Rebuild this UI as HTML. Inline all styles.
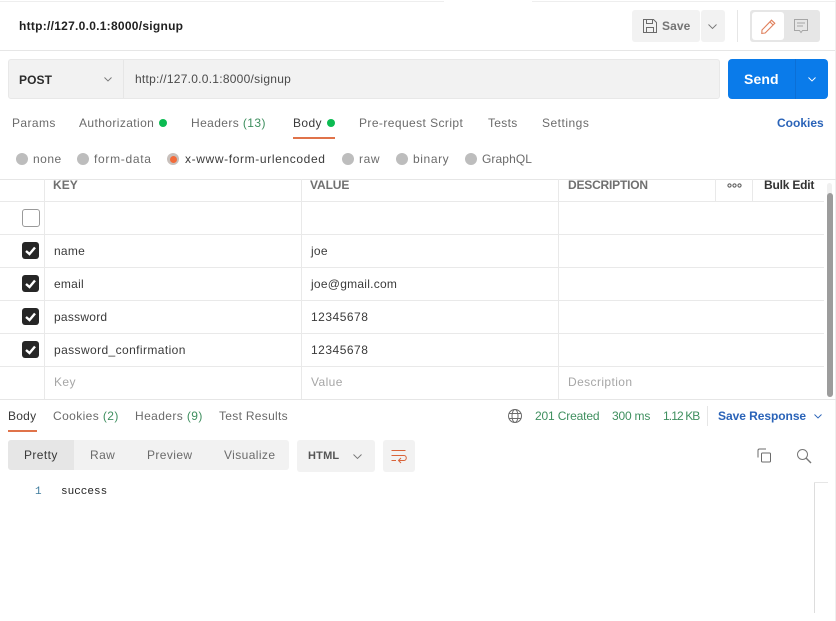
<!DOCTYPE html>
<html><head><meta charset="utf-8">
<style>
html,body{margin:0;padding:0;background:#fff}
body{width:836px;height:621px;position:relative;overflow:hidden;font-family:"Liberation Sans",sans-serif;font-size:12px;color:#6b6b6b}
.t{position:absolute;white-space:nowrap;line-height:16px;letter-spacing:.4px}
.b{position:absolute}
.d{color:#3a3a3a}
.g{color:#3f8f5f}
svg{position:absolute;overflow:visible}
</style></head><body>
<div class="b" style="left:0;top:1px;width:836px;height:1px;background:#eee"></div>
<div class="b" style="left:444px;top:0;width:88px;height:3px;background:#fff"></div>
<div class="b" style="left:0;top:50px;width:836px;height:1px;background:#e6e6e6"></div>
<div class="b" style="left:835px;top:0;width:1px;height:621px;background:#efefef"></div>

<span class="t" style="left:19px;top:18px;color:#212121;font-weight:bold;letter-spacing:.27px">http://127.0.0.1:8000/signup</span>

<div class="b" style="left:632px;top:10px;width:68px;height:32px;background:#f2f2f2;border-radius:3px"></div>
<div class="b" style="left:701px;top:10px;width:24px;height:32px;background:#f2f2f2;border-radius:3px"></div>
<svg style="left:643px;top:19px" width="14" height="14" viewBox="0 0 14 14" fill="none" stroke="#6b6b6b" stroke-width="1"><path d="M.5 .5H10.5L13.5 3.5V13.5H.5Z"/><path d="M3.5 .5V4.5H9.5V.5M3.5 13.5V8.5H10.5V13.5"/></svg>
<span class="t" style="left:662px;top:18px;color:#747474;font-weight:bold;letter-spacing:.1px">Save</span>
<svg style="left:708px;top:24px" width="9" height="5" fill="none" stroke="#777" stroke-width=".9"><path d="M.5 .5L4.5 4.5L8.5 .5"/></svg>
<div class="b" style="left:737px;top:10px;width:1px;height:32px;background:#e6e6e6"></div>
<div class="b" style="left:750px;top:10px;width:70px;height:32px;background:#e6e6e6;border-radius:3px"></div>
<div class="b" style="left:752px;top:12px;width:32px;height:28px;background:#fff;border-radius:3px"></div>
<svg style="left:761px;top:19px" width="15" height="15" viewBox="0 0 15 15" fill="none" stroke="#e0805c" stroke-width="1.1"><path d="M1 11L10.5 1.2L13.8 4.3L4.2 14L.8 14.4Z"/><path d="M9 3L12.2 6"/></svg>
<svg style="left:794px;top:19px" width="14" height="15" viewBox="0 0 14 15" fill="none" stroke="#a6a6a6"><path d="M.5 .5H13.5V11.5H8.5L7 13.5L5.5 11.5H.5Z"/><path d="M3 4H11M3 7H9"/></svg>

<div class="b" style="left:8px;top:59px;width:710px;height:38px;background:#f2f2f2;border:1px solid #e8e8e8;border-radius:3px"></div>
<div class="b" style="left:123px;top:60px;width:1px;height:38px;background:#e6e6e6"></div>
<span class="t" style="left:19px;top:72px;color:#2b2b2b;font-weight:bold;font-size:12px;letter-spacing:.1px">POST</span>
<svg style="left:104px;top:77px" width="8" height="5" fill="none" stroke="#777" stroke-width=".9"><path d="M.5 .5L4 4L7.5 .5"/></svg>
<span class="t" style="left:135px;top:71px;color:#4a4a4a;letter-spacing:.26px">http://127.0.0.1:8000/signup</span>

<div class="b" style="left:728px;top:59px;width:100px;height:40px;background:#0a7bea;border-radius:4px"></div>
<div class="b" style="left:795px;top:59px;width:1px;height:40px;background:#0b6fd6"></div>
<span class="t" style="left:744px;top:71px;color:#fff;font-weight:bold;font-size:14px;letter-spacing:.1px">Send</span>
<svg style="left:808px;top:77px" width="8" height="5" fill="none" stroke="#fff" stroke-width=".9"><path d="M.5 .5L4 4L7.5 .5"/></svg>

<span class="t" style="left:12px;top:115px">Params</span>
<span class="t" style="left:79px;top:115px">Authorization</span>
<div class="b" style="left:159px;top:119px;width:8px;height:8px;border-radius:50%;background:#0cbb52"></div>
<span class="t" style="left:191px;top:115px">Headers <span class="g">(13)</span></span>
<span class="t d" style="left:293px;top:115px">Body</span>
<div class="b" style="left:327px;top:119px;width:8px;height:8px;border-radius:50%;background:#0cbb52"></div>
<div class="b" style="left:293px;top:137px;width:42px;height:2px;background:#e0734a"></div>
<span class="t" style="left:359px;top:115px;letter-spacing:.42px">Pre-request Script</span>
<span class="t" style="left:488px;top:115px;letter-spacing:.3px">Tests</span>
<span class="t" style="left:542px;top:115px;letter-spacing:.5px">Settings</span>
<span class="t" style="left:777px;top:115px;color:#2a63b8;font-weight:bold;letter-spacing:0">Cookies</span>

<div class="b" style="left:16px;top:153px;width:12px;height:12px;border-radius:50%;background:#bdbdbd"></div>
<span class="t" style="left:33px;top:151px;letter-spacing:.5px">none</span>
<div class="b" style="left:77px;top:153px;width:12px;height:12px;border-radius:50%;background:#bdbdbd"></div>
<span class="t" style="left:94px;top:151px;letter-spacing:.7px">form-data</span>
<div class="b" style="left:167px;top:153px;width:12px;height:12px;border-radius:50%;background:#c8c0bc"></div>
<div class="b" style="left:170px;top:156px;width:7px;height:7px;border-radius:50%;background:#f26b3a"></div>
<span class="t d" style="left:185px;top:151px;letter-spacing:.63px">x-www-form-urlencoded</span>
<div class="b" style="left:342px;top:153px;width:12px;height:12px;border-radius:50%;background:#bdbdbd"></div>
<span class="t" style="left:359px;top:151px;letter-spacing:.6px">raw</span>
<div class="b" style="left:396px;top:153px;width:12px;height:12px;border-radius:50%;background:#bdbdbd"></div>
<span class="t" style="left:413px;top:151px;letter-spacing:.6px">binary</span>
<div class="b" style="left:465px;top:153px;width:12px;height:12px;border-radius:50%;background:#bdbdbd"></div>
<span class="t" style="left:482px;top:151px;letter-spacing:.1px">GraphQL</span>

<div class="b" style="left:0;top:179px;width:836px;height:1px;background:#e6e6e6"></div>
<div class="b" style="left:0;top:201px;width:824px;height:1px;background:#e9e9e9"></div>
<div class="b" style="left:0;top:234px;width:824px;height:1px;background:#e9e9e9"></div>
<div class="b" style="left:0;top:267px;width:824px;height:1px;background:#e9e9e9"></div>
<div class="b" style="left:0;top:300px;width:824px;height:1px;background:#e9e9e9"></div>
<div class="b" style="left:0;top:333px;width:824px;height:1px;background:#e9e9e9"></div>
<div class="b" style="left:0;top:366px;width:824px;height:1px;background:#e9e9e9"></div>
<div class="b" style="left:0;top:399px;width:836px;height:1px;background:#e6e6e6"></div>
<div class="b" style="left:44px;top:179px;width:1px;height:220px;background:#e9e9e9"></div>
<div class="b" style="left:301px;top:179px;width:1px;height:220px;background:#e9e9e9"></div>
<div class="b" style="left:558px;top:179px;width:1px;height:220px;background:#e9e9e9"></div>
<div class="b" style="left:715px;top:179px;width:1px;height:22px;background:#e9e9e9"></div>
<div class="b" style="left:752px;top:179px;width:1px;height:22px;background:#e9e9e9"></div>

<span class="t" style="left:53px;top:177px;font-weight:bold;color:#707070;letter-spacing:.05px">KEY</span>
<span class="t" style="left:310px;top:177px;font-weight:bold;color:#707070;letter-spacing:-.1px">VALUE</span>
<span class="t" style="left:568px;top:177px;font-weight:bold;color:#707070;letter-spacing:-.2px">DESCRIPTION</span>
<svg style="left:727px;top:183px" width="15" height="5" fill="none" stroke="#555"><circle cx="2.5" cy="2.5" r="1.6"/><circle cx="7.5" cy="2.5" r="1.6"/><circle cx="12.5" cy="2.5" r="1.6"/></svg>
<span class="t" style="left:764px;top:177px;font-weight:bold;color:#333;letter-spacing:-.2px">Bulk Edit</span>

<div class="b" style="left:827px;top:183px;width:5px;height:214px;background:#f0f0f0;border-radius:3px"></div>
<div class="b" style="left:827px;top:193px;width:6px;height:204px;background:#9c9c9c;border-radius:3px"></div>

<div class="b" style="left:22px;top:209px;width:16px;height:16px;border:1px solid #9a9a9a;border-radius:3px;background:#fff"></div>
<div class="b" style="left:22px;top:242px;width:17px;height:17px;background:#262626;border-radius:3px"></div>
<svg style="left:22px;top:242px" width="17" height="17" fill="none" stroke="#fff" stroke-width="2.4"><path d="M4 9L7.5 12L13 5.5"/></svg>
<div class="b" style="left:22px;top:275px;width:17px;height:17px;background:#262626;border-radius:3px"></div>
<svg style="left:22px;top:275px" width="17" height="17" fill="none" stroke="#fff" stroke-width="2.4"><path d="M4 9L7.5 12L13 5.5"/></svg>
<div class="b" style="left:22px;top:308px;width:17px;height:17px;background:#262626;border-radius:3px"></div>
<svg style="left:22px;top:308px" width="17" height="17" fill="none" stroke="#fff" stroke-width="2.4"><path d="M4 9L7.5 12L13 5.5"/></svg>
<div class="b" style="left:22px;top:341px;width:17px;height:17px;background:#262626;border-radius:3px"></div>
<svg style="left:22px;top:341px" width="17" height="17" fill="none" stroke="#fff" stroke-width="2.4"><path d="M4 9L7.5 12L13 5.5"/></svg>

<span class="t d" style="left:54px;top:243px;letter-spacing:.25px">name</span>
<span class="t d" style="left:311px;top:243px;letter-spacing:.25px">joe</span>
<span class="t d" style="left:54px;top:276px;letter-spacing:.25px">email</span>
<span class="t d" style="left:311px;top:276px;letter-spacing:.25px">joe@gmail.com</span>
<span class="t d" style="left:54px;top:309px;letter-spacing:.25px">password</span>
<span class="t d" style="left:311px;top:309px;letter-spacing:.5px">12345678</span>
<span class="t d" style="left:54px;top:342px">password_confirmation</span>
<span class="t d" style="left:311px;top:342px;letter-spacing:.5px">12345678</span>
<span class="t" style="left:54px;top:374px;color:#a6a6a6">Key</span>
<span class="t" style="left:311px;top:374px;color:#a6a6a6">Value</span>
<span class="t" style="left:568px;top:374px;color:#a6a6a6">Description</span>

<span class="t d" style="left:8px;top:408px;letter-spacing:.25px">Body</span>
<div class="b" style="left:8px;top:430px;width:29px;height:2px;background:#e0734a"></div>
<span class="t" style="left:53px;top:408px">Cookies <span class="g">(2)</span></span>
<span class="t" style="left:135px;top:408px">Headers <span class="g">(9)</span></span>
<span class="t" style="left:219px;top:408px;letter-spacing:.3px">Test Results</span>

<svg style="left:508px;top:409px" width="14" height="14" viewBox="0 0 14 14" fill="none" stroke="#6b6b6b"><circle cx="7" cy="7" r="6.5"/><ellipse cx="7" cy="7" rx="3" ry="6.5"/><path d="M1 4.5H13M1 9.5H13"/></svg>
<span class="t g" style="left:535px;top:408px;letter-spacing:-.15px">201 Created</span>
<span class="t g" style="left:612px;top:408px;letter-spacing:-.2px">300 ms</span>
<span class="t g" style="left:663px;top:408px;letter-spacing:-.9px">1.12 KB</span>
<div class="b" style="left:707px;top:406px;width:1px;height:20px;background:#e6e6e6"></div>
<span class="t" style="left:718px;top:408px;color:#2a63b8;font-weight:bold;letter-spacing:-.05px">Save Response</span>
<svg style="left:814px;top:414px" width="8" height="5" fill="none" stroke="#2a63b8" stroke-width=".9"><path d="M.5 .5L4 4L7.5 .5"/></svg>

<div class="b" style="left:8px;top:440px;width:281px;height:30px;background:#f2f2f2;border-radius:3px"></div>
<div class="b" style="left:8px;top:440px;width:66px;height:30px;background:#e6e6e6;border-radius:3px 0 0 3px"></div>
<span class="t d" style="left:24px;top:447px">Pretty</span>
<span class="t" style="left:90px;top:447px">Raw</span>
<span class="t" style="left:147px;top:447px">Preview</span>
<span class="t" style="left:224px;top:447px">Visualize</span>
<div class="b" style="left:297px;top:440px;width:78px;height:32px;background:#f2f2f2;border-radius:3px"></div>
<span class="t" style="left:308px;top:448px;font-weight:bold;font-size:11px;color:#555;letter-spacing:.2px">HTML</span>
<svg style="left:353px;top:454px" width="9" height="5" fill="none" stroke="#777" stroke-width=".9"><path d="M.5 .5L4.5 4.5L8.5 .5"/></svg>
<div class="b" style="left:383px;top:440px;width:32px;height:32px;background:#f2f2f2;border-radius:3px"></div>
<svg style="left:391px;top:450px" width="16" height="14" viewBox="0 0 16 14" fill="none" stroke="#d9643a"><path d="M.5 .5H14.5M.5 5.5H13C16 5.5 16 10.5 13 10.5H8"/><path d="M10 8L7.5 10.5L10 13M.5 10.5H5"/></svg>
<svg style="left:757px;top:448px" width="15" height="15" viewBox="0 0 15 15" fill="none" stroke="#6b6b6b"><rect x="4.5" y="5" width="9" height="9" rx="1"/><path d="M1 9.5V2.5Q1 1 2.5 1H9"/></svg>
<svg style="left:797px;top:449px" width="15" height="15" viewBox="0 0 15 15" fill="none" stroke="#777" stroke-width="1"><circle cx="5.5" cy="5.5" r="5"/><path d="M9 9L14 14" stroke-width="1.4"/></svg>

<span class="t" style="left:35px;top:484px;color:#3d7a9c;font-family:'Liberation Mono',monospace;font-size:11px;letter-spacing:0">1</span>
<span class="t" style="left:61px;top:484px;color:#222;font-family:'Liberation Mono',monospace;font-size:11px;letter-spacing:0">success</span>
<div class="b" style="left:814px;top:482px;width:1px;height:131px;background:#ddd"></div>
<div class="b" style="left:814px;top:482px;width:14px;height:1px;background:#e6e6e6"></div>
</body></html>
